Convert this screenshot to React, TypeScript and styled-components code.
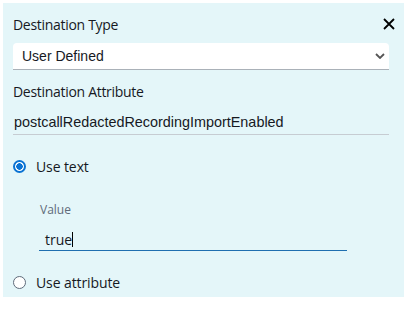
import React from "react";
import styled, {createGlobalStyle} from "styled-components";

const Global = createGlobalStyle`
  body {
    margin: 0;
    background: #ffffff;
    font-family: "Open Sans", "Noto Sans", sans-serif;
    color: #16191f;
  }
`;

const App = () => {
    return (
        <>
            <Global />
            <Panel>
                <Header>
                    <Label>Destination Type</Label>
                    <Close aria-label="close">
                        <svg width="12" height="12" viewBox="0 0 12 12">
                            <path d="M1 1 L11 11 M11 1 L1 11" stroke="#000" strokeWidth="1.8" />
                        </svg>
                    </Close>
                </Header>
                <Select>
                    <span>User Defined</span>
                    <svg width="10" height="6" viewBox="0 0 10 6">
                        <path d="M1 1 L5 5 L9 1" stroke="#555" strokeWidth="1.8" fill="none" />
                    </svg>
                </Select>
                <Label>Destination Attribute</Label>
                <AttrField>postcallRedactedRecordingImportEnabled</AttrField>
                <RadioRow>
                    <Radio checked />
                    <RadioText>Use text</RadioText>
                </RadioRow>
                <Nested>
                    <SubLabel>Value</SubLabel>
                    <ValueField>
                        true<Caret />
                    </ValueField>
                </Nested>
                <RadioRow>
                    <Radio />
                    <RadioText>Use attribute</RadioText>
                </RadioRow>
            </Panel>
        </>
    );
};

export default App;

const Panel = styled.div`
  margin: 3px 0 0 3px;
  width: 401px;
  height: 294px;
  box-sizing: border-box;
  background-color: #e4f6f9;
  padding: 12px 15px 0 10px;
  display: flex;
  flex-direction: column;
`;

const Header = styled.div`
  display: flex;
  justify-content: space-between;
  align-items: center;
`;

const Label = styled.div`
  font-size: 14px;
  line-height: 20px;
  letter-spacing: -0.3px;
  color: #16191f;
`;

const Close = styled.div`
  width: 12px;
  height: 12px;
  margin-right: -6px;
  margin-top: -3px;
  display: flex;
`;

const Select = styled.div`
  margin-top: 8px;
  margin-bottom: 12px;
  height: 26px;
  background: #ffffff;
  border-bottom: 1px solid #aab1b8;
  border-radius: 4px 4px 0 0;
  display: flex;
  align-items: center;
  justify-content: space-between;
  padding: 0 4px 0 9px;
  font-family: "Liberation Sans", Arial, sans-serif;
  font-size: 14px;
  color: #16191f;
`;

const AttrField = styled.div`
  margin-top: 10px;
  height: 22px;
  border-bottom: 1px solid #c6ccd2;
  padding-left: 1px;
  font-family: "Liberation Sans", Arial, sans-serif;
  font-size: 14.4px;
  line-height: 20px;
  color: #16191f;
`;

const RadioRow = styled.div`
  display: flex;
  align-items: center;
  gap: 10px;
  height: 20px;
  margin-top: 21px;
`;

const Radio = styled.span<{checked?: boolean}>`
  width: 13px;
  height: 13px;
  border-radius: 50%;
  box-sizing: border-box;
  border: ${p => (p.checked ? "2px solid #0972d3" : "1.5px solid #5f6b7a")};
  background: ${p => (p.checked ? "radial-gradient(circle, #0972d3 0 3px, #ffffff 3.5px)" : "#ffffff")};
`;

const RadioText = styled.span`
  font-size: 14px;
  letter-spacing: -0.1px;
  color: #16191f;
`;

const Nested = styled.div`
  margin-left: 26px;
  margin-top: 25px;
  width: 308px;
`;

const SubLabel = styled.div`
  font-size: 12px;
  line-height: 18px;
  color: #5f6b7a;
  padding-left: 1px;
`;

const ValueField = styled.div`
  margin-top: 10px;
  height: 21px;
  border-bottom: 1px solid #1f6fb0;
  padding-left: 6px;
  font-size: 14px;
  line-height: 22px;
  color: #16191f;
  display: flex;
  align-items: center;
`;

const Caret = styled.span`
  display: inline-block;
  width: 1px;
  height: 15px;
  background: #000;
`;
